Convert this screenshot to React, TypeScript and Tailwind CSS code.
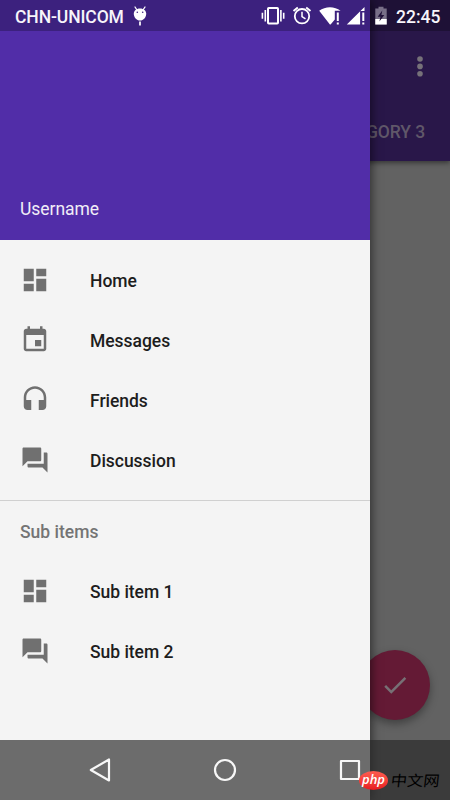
import React from 'react';

const ICONS = {
  dashboard: 'M3 13h8V3H3v10zm0 8h8v-6H3v6zm10 0h8V11h-8v10zm0-18v6h8V3h-8z',
  event:
    'M17 12h-5v5h5v-5zM16 1v2H8V1H6v2H5c-1.11 0-1.99.9-1.99 2L3 19c0 1.1.89 2 2 2h14c1.1 0 2-.9 2-2V5c0-1.1-.9-2-2-2h-1V1h-2zm3 18H5V8h14v11z',
  headset:
    'M12 1c-4.97 0-9 4.03-9 9v7c0 1.66 1.34 3 3 3h3v-8H5v-2c0-3.87 3.13-7 7-7s7 3.13 7 7v2h-4v8h3c1.66 0 3-1.34 3-3v-7c0-4.97-4.03-9-9-9z',
  forum:
    'M21 6h-2v9H6v2c0 .55.45 1 1 1h11l4 4V7c0-.55-.45-1-1-1zm-4 6V3c0-.55-.45-1-1-1H3c-.55 0-1 .45-1 1v14l4-4h10c.55 0 1-.45 1-1z',
};

function Item({ icon, label }: { icon: keyof typeof ICONS; label: string }) {
  return (
    <li className="flex h-[60px] items-center gap-10 px-5">
      <svg className="size-[30px] shrink-0 fill-[#707070]" viewBox="0 0 24 24">
        <path d={ICONS[icon]} />
      </svg>
      <span className="pt-[2px] text-[17.5px] leading-6 font-medium tracking-[-0.03px] text-[#1d1d1d]">{label}</span>
    </li>
  );
}

function Page() {
  return (
    <div className="isolate flex h-full flex-col bg-[#626262]">
      <header className="z-10 flex h-[161px] flex-col justify-between bg-[#291749] pt-[56px] shadow-[0_2px_5px_rgba(0,0,0,0.45)]">
        <div className="flex justify-end pr-[27px]">
          <svg className="h-[21px] w-[6px] fill-[#767179]" viewBox="0 0 6 21">
            <circle cx="3" cy="3" r="2.8" />
            <circle cx="3" cy="10.4" r="2.8" />
            <circle cx="3" cy="17.8" r="2.8" />
          </svg>
        </div>
        <div className="pr-[25px] pb-[17px] text-right text-[17.5px] leading-6 font-medium tracking-[-0.1px] text-[#605769]">
          CATEGORY 3
        </div>
      </header>
      <main className="flex flex-1 items-end justify-end pr-5 pb-[80px]">
        <button className="flex size-[70px] items-center justify-center rounded-full bg-[#641a35] shadow-[0_4px_8px_rgba(0,0,0,0.35)]">
          <svg className="size-[30px] fill-[#777075]" viewBox="0 0 24 24">
            <path d="M9 16.17L4.83 12l-1.42 1.41L9 19 21 7l-1.41-1.41z" />
          </svg>
        </button>
      </main>
    </div>
  );
}

function Drawer() {
  return (
    <aside className="absolute inset-y-0 left-0 w-[370px] bg-[#f4f4f4] shadow-[2px_0_9px_rgba(0,0,0,0.5)]">
      <div className="flex h-60 items-end bg-[#512da8] px-5 pb-[19px] text-[17.5px] leading-6 tracking-[-0.05px] text-[#f1edf7]">
        Username
      </div>
      <ul className="pt-[10px] pb-[10px]">
        <Item icon="dashboard" label="Home" />
        <Item icon="event" label="Messages" />
        <Item icon="headset" label="Friends" />
        <Item icon="forum" label="Discussion" />
      </ul>
      <div className="border-t border-[#d0d0d0] px-5 pt-[19px] pb-[17px] text-[17.5px] leading-6 font-medium text-[#747474]">
        Sub items
      </div>
      <ul>
        <Item icon="dashboard" label="Sub item 1" />
        <Item icon="forum" label="Sub item 2" />
      </ul>
    </aside>
  );
}

function StatusBar() {
  return (
    <div className="absolute inset-x-0 top-0 flex h-[31px] items-center bg-black/25 pr-[10px] pl-[15px] font-medium text-[#f7f5fa]">
      <span className="w-[110px] pt-[2px] text-[17.5px] leading-6 tracking-[-0.1px] whitespace-nowrap">CHN-UNICOM</span>
      <svg className="ml-[8px] h-[20px] w-[14px]" viewBox="0 0 14 20">
        <path d="M2 1l2 3M12 1l-2 3" stroke="#fff" strokeWidth="1.3" strokeLinecap="round" />
        <path d="M7 15.500v4" stroke="#fff" strokeWidth="1.700" />
        <path d="M7 2.5c3.8 0 6.2 2.3 6.2 5.2 0 3.300-2.700 6.900-6.200 6.900S.8 11 .8 7.7C.8 4.8 3.200 2.5 7 2.5z" fill="#fff" />
        <circle cx="4.300" cy="6.300" r=".8" fill="#3d227e" />
        <circle cx="9.700" cy="6.300" r=".8" fill="#3d227e" />
      </svg>
      <svg className="ml-auto h-[31px] w-[127px]" viewBox="261 0 127 31" fill="none">
        <rect x="268" y="8" width="10" height="15.500" rx=".8" stroke="#fff" strokeWidth="2" />
        <path d="M265.300 10v11.500M280.900 10v11.500M262.400 12.800v6M283.700 12.800v6" stroke="#fff" strokeWidth="1.600" />
        <circle cx="302" cy="16.200" r="7.200" stroke="#fff" strokeWidth="1.800" />
        <path d="M302 11.800v4.800l3.500 2.200" stroke="#fff" strokeWidth="1.500" />
        <path d="M293.500 11l4.300-3.600M310.500 11l-4.300-3.600" stroke="#fff" strokeWidth="1.900" />
        <path d="M319.200 10.800c6-4.700 15.400-4.700 21.400 0h-5.800v8.600l-4.200 5.200h-.7z" fill="#fff" />
        <path d="M336.800 12.500h2v8.500h-2zM336.800 22.500h2v2h-2z" fill="#fff" />
        <path d="M364.500 7v4h-4.400v13.600h-13.300z" fill="#fff" />
        <path d="M362.300 12.500h2v8.500h-2zM362.300 22.500h2v2h-2z" fill="#fff" />
        <path d="M375.300 8.500h3.200V6.700h5v1.800h3.200v16h-11.400z" fill="#786f88" />
        <path d="M375.300 19h11.400v5.500h-11.400z" fill="#fff" />
        <path d="M382.300 10.500l-4.600 6.300h2.800l-1.100 4.700 4.900-6.500h-2.900z" fill="#201139" />
      </svg>
      <span className="ml-[8px] w-[44px] pt-[2px] text-[17.5px] leading-6 whitespace-nowrap">22:45</span>
    </div>
  );
}

function NavBar() {
  return (
    <div className="absolute inset-x-0 bottom-0 h-[60px] bg-[rgba(40,40,40,0.67)]">
      <div className="flex h-full items-center justify-between pr-[88px] pl-[88px]">
        <svg className="h-6 w-6" viewBox="0 0 24 24" fill="none" stroke="#f7f7f7" strokeWidth="2.2" strokeLinejoin="round">
          <path d="M2.800 12L21 1.500v21z" />
        </svg>
        <svg className="h-6 w-6" viewBox="0 0 24 24" fill="none" stroke="#f7f7f7" strokeWidth="2.2">
          <circle cx="12" cy="12" r="10" />
        </svg>
        <svg className="h-6 w-6" viewBox="0 0 24 24" fill="none" stroke="#f7f7f7" strokeWidth="2.2" strokeLinejoin="round">
          <rect x="3" y="3" width="18" height="18" />
        </svg>
      </div>
    </div>
  );
}

function Watermark() {
  return (
    <div className="absolute right-[10px] bottom-[9px] flex h-[21px] items-center gap-[3px] whitespace-nowrap">
      <span className="flex h-[19px] w-[29px] items-center justify-center rounded-[50%] bg-linear-to-b from-[#ff5b50] to-[#e71920] pb-[3px] font-['Open_Sans',sans-serif] text-[13px] leading-none font-semibold text-white italic">
        php
      </span>
      <span className="w-[49px] -translate-y-[1.5px] -skew-x-6 scale-y-[0.9] font-['Noto_Sans_CJK_SC',sans-serif] text-[16.3px] leading-5 text-black">
        中文网
      </span>
    </div>
  );
}

export default function App() {
  return (
    <div className="relative h-[800px] w-[450px] overflow-hidden font-[Roboto,sans-serif]">
      <Page />
      <Drawer />
      <StatusBar />
      <NavBar />
      <Watermark />
    </div>
  );
}
